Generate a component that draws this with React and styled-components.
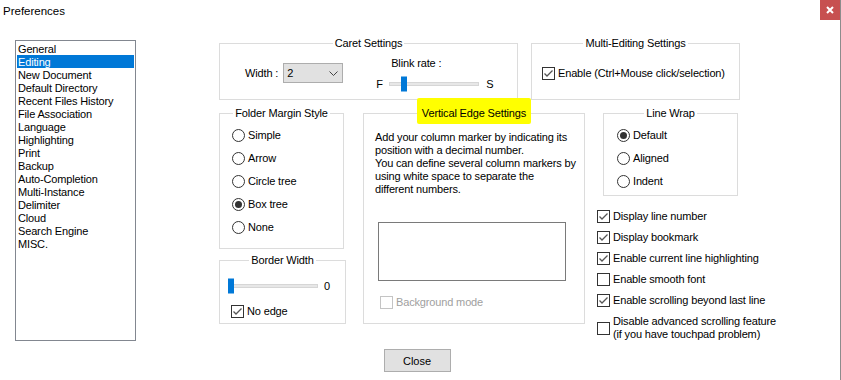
import React from "react";
import styled, { createGlobalStyle } from "styled-components";

const GlobalStyle = createGlobalStyle`
  *, *::before, *::after { box-sizing: border-box; }
  html, body { margin: 0; padding: 0; background: #fff; }
  body {
    font-family: "Liberation Sans", Arial, sans-serif;
    font-size: 11px;
    letter-spacing: -0.15px;
    color: #000;
  }
`;

const Window = styled.div`
  width: 841px;
  height: 380px;
  border-right: 1px solid #8c8c8c;
  background: #fff;
  display: flex;
  flex-direction: column;
`;

const TitleBar = styled.div`
  display: flex;
  justify-content: space-between;
  align-items: flex-start;
  height: 20px;
`;

const Title = styled.div`
  padding: 1px 0 0 3px;
  line-height: 20px;
  font-size: 11.5px;
  letter-spacing: 0;
`;

const CloseX = styled.div`
  width: 20px;
  height: 20px;
  background: #c75050;
  display: flex;
  align-items: center;
  justify-content: center;
`;

const Body = styled.div`
  display: flex;
  height: 320px;
`;

const CategoryList = styled.ul`
  margin: 20px 0 0 15px;
  padding: 1px;
  width: 121px;
  height: 301px;
  border: 1px solid #828790;
  list-style: none;
  flex-shrink: 0;
`;

const CategoryItem = styled.li`
  height: 13px;
  line-height: 14px;
  padding-left: 1px;
  white-space: nowrap;
  background: ${(p) => (p.$selected ? "#0078d7" : "transparent")};
  color: ${(p) => (p.$selected ? "#fff" : "#000")};
`;

const Main = styled.div`
  margin-left: 83px;
  padding-top: 23px;
  display: flex;
  flex-direction: column;
  gap: 13px;
`;

const TopRow = styled.div`
  display: flex;
  gap: 13px;
`;

const MidRow = styled.div`
  display: flex;
  align-items: flex-start;
`;

const GroupBox = styled.div`
  width: ${(p) => p.$w}px;
  height: ${(p) => p.$h}px;
  border: 1px solid #dcdcdc;
  display: flex;
  flex-direction: column;
  flex-shrink: 0;
`;

const Legend = styled.div`
  align-self: center;
  margin-top: -7px;
  line-height: 13px;
  padding: 0 2px;
  background: #fff;
  position: relative;
  z-index: 0;
  white-space: nowrap;

  ${(p) =>
    p.$mark &&
    `
    &::before {
      content: "";
      position: absolute;
      left: -3px;
      right: -3px;
      top: -9px;
      bottom: -4px;
      background: #ffff00;
      border-radius: 2px;
      z-index: -1;
    }
  `}
`;

const CaretBody = styled.div`
  display: flex;
  padding-left: 25px;
`;

const WidthField = styled.div`
  display: flex;
  align-items: center;
  gap: 5px;
  margin-top: 13px;
  height: 20px;
`;

const ComboBox = styled.div`
  width: 60px;
  height: 20px;
  background: #e1e1e1;
  border: 1px solid #adadad;
  display: flex;
  align-items: center;
  justify-content: space-between;
  padding: 0 4px 0 3px;
`;

const BlinkField = styled.div`
  margin-left: 33px;
  display: flex;
  flex-direction: column;
`;

const BlinkLabel = styled.div`
  margin-top: 7px;
  padding-left: 15px;
  line-height: 13px;
`;

const SliderRow = styled.div`
  display: flex;
  align-items: center;
  height: 15px;
  margin-top: ${(p) => p.$top || 0}px;
  padding-left: ${(p) => p.$left || 0}px;
`;

const SliderEnd = styled.span`
  width: ${(p) => (p.$w ? `${p.$w}px` : "auto")};
  margin-left: ${(p) => p.$gap || 0}px;
`;

const Track = styled.div`
  position: relative;
  width: ${(p) => p.$w}px;
  height: 4px;
  background: #e7e7e7;
  border: 1px solid #d6d6d6;
`;

const Thumb = styled.div`
  position: absolute;
  top: 50%;
  left: ${(p) => p.$pos}px;
  width: 6px;
  height: 15px;
  transform: translateY(-50%);
  background: #0078d7;
`;

const CheckRow = styled.label`
  display: flex;
  align-items: center;
  gap: 3px;
  line-height: 13px;
  margin-top: ${(p) => p.$top || 0}px;
  padding-left: ${(p) => p.$left || 0}px;
  color: ${(p) => (p.$disabled ? "#a0a0a0" : "#000")};
`;

const Box = styled.span`
  width: 13px;
  height: 13px;
  flex-shrink: 0;
  border: 1px solid ${(p) => (p.$disabled ? "#c4c4c4" : "#333")};
  background: #fff;
  display: flex;
  align-items: center;
  justify-content: center;
`;

const RadioList = styled.div`
  display: flex;
  flex-direction: column;
  gap: 10px;
  margin-top: 9px;
  padding-left: ${(p) => p.$left}px;
`;

const RadioRow = styled.label`
  display: flex;
  align-items: center;
  gap: 3px;
  line-height: 13px;
`;

const RadioDot = styled.span`
  width: 13px;
  height: 13px;
  border-radius: 50%;
  border: 1px solid #333;
  background: #fff;
  display: flex;
  align-items: center;
  justify-content: center;

  &::after {
    content: "";
    width: 7px;
    height: 7px;
    border-radius: 50%;
    background: ${(p) => (p.$checked ? "#333" : "transparent")};
  }
`;

const ColA = styled.div`
  display: flex;
  flex-direction: column;
  gap: 11px;
  width: 127px;
`;

const EdgeBox = styled(GroupBox)`
  margin-left: 17px;
`;

const Paragraph = styled.p`
  margin: 11px 0 0 11px;
  line-height: 13px;
  white-space: nowrap;
`;

const EdgeInput = styled.div`
  margin: 26px 0 0 14px;
  width: 188px;
  height: 59px;
  border: 1px solid #7a7a7a;
  background: #fff;
`;

const ColC = styled.div`
  margin-left: 12px;
  display: flex;
  flex-direction: column;
`;

const WrapBox = styled(GroupBox)`
  margin-left: 6px;
`;

const CheckList = styled.div`
  display: flex;
  flex-direction: column;
  gap: 8px;
  margin-top: 14px;
`;

const Footer = styled.div`
  display: flex;
  justify-content: center;
  padding: 9px 6px 0 0;
`;

const Button = styled.button`
  width: 67px;
  height: 23px;
  background: #e1e1e1;
  border: 1px solid #adadad;
  font: inherit;
  color: #000;
  padding: 0;
`;

function CheckBox({ checked, disabled, children, top, left }) {
  return (
    <CheckRow $top={top} $left={left} $disabled={disabled}>
      <Box $disabled={disabled}>
        {checked && (
          <svg width="11" height="11" viewBox="0 0 11 11">
            <polyline points="1.5,5.5 4,8 9.5,2.5" fill="none" stroke="#555" strokeWidth="1.3" />
          </svg>
        )}
      </Box>
      <span>{children}</span>
    </CheckRow>
  );
}

function Radio({ checked, children }) {
  return (
    <RadioRow>
      <RadioDot $checked={checked} />
      <span>{children}</span>
    </RadioRow>
  );
}

const categories = [
  "General", "Editing", "New Document", "Default Directory", "Recent Files History",
  "File Association", "Language", "Highlighting", "Print", "Backup",
  "Auto-Completion", "Multi-Instance", "Delimiter", "Cloud", "Search Engine", "MISC.",
];

export default function App() {
  return (
    <>
      <GlobalStyle />
      <Window>
        <TitleBar>
          <Title>Preferences</Title>
          <CloseX>
            <svg width="8" height="8" viewBox="0 0 8 8">
              <path d="M1 1 L7 7 M7 1 L1 7" stroke="#fff" strokeWidth="2" />
            </svg>
          </CloseX>
        </TitleBar>
        <Body>
          <CategoryList>
            {categories.map((c) => (
              <CategoryItem key={c} $selected={c === "Editing"}>{c}</CategoryItem>
            ))}
          </CategoryList>
          <Main>
            <TopRow>
              <GroupBox $w={299} $h={57}>
                <Legend>Caret Settings</Legend>
                <CaretBody>
                  <WidthField>
                    <span>Width :</span>
                    <ComboBox>
                      <span>2</span>
                      <svg width="9" height="5" viewBox="0 0 9 5">
                        <polyline points="0.5,0.5 4.5,4.5 8.5,0.5" fill="none" stroke="#444" strokeWidth="1" />
                      </svg>
                    </ComboBox>
                  </WidthField>
                  <BlinkField>
                    <BlinkLabel>Blink rate :</BlinkLabel>
                    <SliderRow $top={6}>
                      <SliderEnd $w={13}>F</SliderEnd>
                      <Track $w={90}>
                        <Thumb $pos={11} />
                      </Track>
                      <SliderEnd $gap={7}>S</SliderEnd>
                    </SliderRow>
                  </BlinkField>
                </CaretBody>
              </GroupBox>
              <GroupBox $w={209} $h={57}>
                <Legend>Multi-Editing Settings</Legend>
                <CheckBox checked top={17} left={10}>Enable (Ctrl+Mouse click/selection)</CheckBox>
              </GroupBox>
            </TopRow>
            <MidRow>
              <ColA>
                <GroupBox $w={125} $h={136}>
                  <Legend>Folder Margin Style</Legend>
                  <RadioList $left={12}>
                    <Radio>Simple</Radio>
                    <Radio>Arrow</Radio>
                    <Radio>Circle tree</Radio>
                    <Radio checked>Box tree</Radio>
                    <Radio>None</Radio>
                  </RadioList>
                </GroupBox>
                <GroupBox $w={127} $h={64}>
                  <Legend>Border Width</Legend>
                  <SliderRow $top={11} $left={8}>
                    <Track $w={90}>
                      <Thumb $pos={-1} />
                    </Track>
                    <SliderEnd $gap={6}>0</SliderEnd>
                  </SliderRow>
                  <CheckBox checked top={12} left={11}>No edge</CheckBox>
                </GroupBox>
              </ColA>
              <EdgeBox $w={222} $h={211}>
                <Legend $mark>Vertical Edge Settings</Legend>
                <Paragraph>
                  Add your column marker by indicating its<br />
                  position with a decimal number.<br />
                  You can define several column markers by<br />
                  using white space to separate the<br />
                  different numbers.
                </Paragraph>
                <EdgeInput />
                <CheckBox disabled top={15} left={16}>Background mode</CheckBox>
              </EdgeBox>
              <ColC>
                <WrapBox $w={135} $h={83}>
                  <Legend>Line Wrap</Legend>
                  <RadioList $left={13}>
                    <Radio checked>Default</Radio>
                    <Radio>Aligned</Radio>
                    <Radio>Indent</Radio>
                  </RadioList>
                </WrapBox>
                <CheckList>
                  <CheckBox checked>Display line number</CheckBox>
                  <CheckBox checked>Display bookmark</CheckBox>
                  <CheckBox checked>Enable current line highlighting</CheckBox>
                  <CheckBox>Enable smooth font</CheckBox>
                  <CheckBox checked>Enable scrolling beyond last line</CheckBox>
                  <CheckBox>
                    Disable advanced scrolling feature<br />
                    (if you have touchpad problem)
                  </CheckBox>
                </CheckList>
              </ColC>
            </MidRow>
          </Main>
        </Body>
        <Footer>
          <Button>Close</Button>
        </Footer>
      </Window>
    </>
  );
}
